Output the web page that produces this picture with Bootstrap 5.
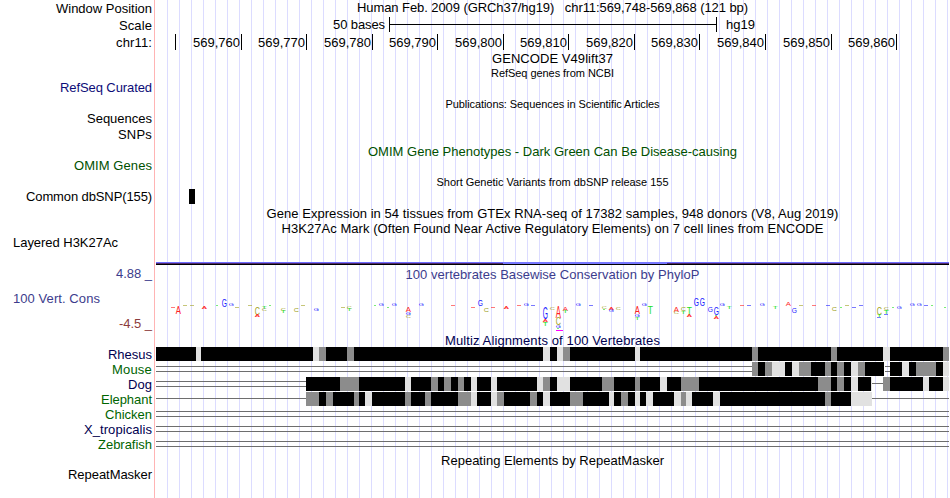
<!DOCTYPE html>
<html lang="en">
<head>
<meta charset="utf-8">
<title>Genome Browser chr11:569,748-569,868</title>
<meta name="viewport" content="width=device-width, initial-scale=1">
<link href="https://cdn.jsdelivr.net/npm/bootstrap@5.3.0/dist/css/bootstrap.min.css" rel="stylesheet">
<style>
body{background:#fff;color:#000;font:13px/15px "Liberation Sans",Arial,sans-serif;overflow:hidden}
.browser{width:949px;height:498px;
 background:linear-gradient(#ffb4b4,#ffb4b4) 154px 0/1px 100% no-repeat,
 repeating-linear-gradient(90deg,#dcdcff 0 1px,transparent 1px 12px) 167px 0/782px 100% no-repeat}
.labels{width:156px;padding:1px 4px 0 13px}
.tracks{width:793px}
.h14{height:14px}.h15{height:15px}.h16{height:16px}.h17{height:17px}.h25{height:25px}.h30{height:30px}
.h31{height:31px}.h45{height:45px}.h46{height:46px}.h47{height:47px}
.fine{font-size:11px}
.keep{white-space:pre}
.navy{color:#0c0c78}.deep{color:#000050}.green{color:#005000}.leaf{color:#006400}.cons{color:#3c3c8c}.neg{color:#8c3c3c}
.scalebar{width:328px;height:15px;border:solid #000;border-width:0 1px;background:linear-gradient(#000,#000) 0 7px/100% 1px no-repeat}
.scaletext{width:233px;padding-right:4px}
.assembly{padding-left:9px}
.ruler{display:grid;grid-template-columns:20px 66px 65px 66px 65px 66px 65px 66px 65px 66px 66px 65px;height:14px;margin-bottom:3px}
.ruler div{border-right:1px solid #000;padding-right:1px;padding-top:1px;display:flex;justify-content:flex-end}
svg{display:block}
</style>
<script src="https://cdn.jsdelivr.net/npm/bootstrap@5.3.0/dist/js/bootstrap.bundle.min.js"></script>
</head>
<body>
<main class="browser d-flex">
 <div class="labels d-flex flex-column text-end text-nowrap flex-shrink-0">
  <div class="h17"><span data-w="96">Window Position</span></div>
  <div class="h17"><span data-w="33">Scale</span></div>
  <div class="h45"><span data-w="36">chr11:</span></div>
  <div class="h31 navy"><span data-w="92">RefSeq Curated</span></div>
  <div class="h16"><span data-w="65">Sequences</span></div>
  <div class="h31"><span data-w="34">SNPs</span></div>
  <div class="h31 green"><span data-w="78">OMIM Genes</span></div>
  <div class="h46"><span data-w="126">Common dbSNP(155)</span></div>
  <div class="h31 text-start"><span data-w="105">Layered H3K27Ac</span></div>
  <div class="h25 cons"><span data-w="36">4.88 _</span></div>
  <div class="h25 cons text-start"><span data-w="87">100 Vert. Cons</span></div>
  <div class="h31 neg"><span data-w="33">-4.5 _</span></div>
  <div class="h15 deep"><span data-w="44">Rhesus</span></div>
  <div class="h15 leaf"><span data-w="40">Mouse</span></div>
  <div class="h15 deep"><span data-w="24">Dog</span></div>
  <div class="h15 leaf"><span data-w="51">Elephant</span></div>
  <div class="h15 leaf"><span data-w="47">Chicken</span></div>
  <div class="h15 deep"><span data-w="68">X_tropicalis</span></div>
  <div class="h30 leaf"><span data-w="54">Zebrafish</span></div>
  <div class="h31"><span data-w="84">RepeatMasker</span></div>
 </div>
 <div class="tracks d-flex flex-column text-center text-nowrap flex-shrink-0">
  <div class="h17"><span class="keep" data-w="391">Human Feb. 2009 (GRCh37/hg19)   chr11:569,748-569,868 (121 bp)</span></div>
  <div class="h17 d-flex">
   <div class="scaletext text-end"><span data-w="52">50 bases</span></div>
   <div class="scalebar"></div>
   <div class="assembly"><span data-w="29">hg19</span></div>
  </div>
  <div class="ruler" id="ruler"></div>
  <div class="h15"><span data-w="121">GENCODE V49lift37</span></div>
  <div class="h31 fine"><span data-w="123">RefSeq genes from NCBI</span></div>
  <div class="h47 fine"><span data-w="214">Publications: Sequences in Scientific Articles</span></div>
  <div class="h31 green"><span data-w="369">OMIM Gene Phenotypes - Dark Green Can Be Disease-causing</span></div>
  <div class="h14 fine"><span data-w="232">Short Genetic Variants from dbSNP release 155</span></div>
  <svg width="793" height="17"><rect x="33" y="0" width="6" height="15"/></svg>
  <div class="h15"><span data-w="572">Gene Expression in 54 tissues from GTEx RNA-seq of 17382 samples, 948 donors (V8, Aug 2019)</span></div>
  <div class="h15"><span data-w="542">H3K27Ac Mark (Often Found Near Active Regulatory Elements) on 7 cell lines from ENCODE</span></div>
  <svg width="793" height="31" shape-rendering="crispEdges"><path fill="#6e6eff" d="M0 26h793v1H0z"/><path fill="#50286e" d="M0 27h793v1H0z"/><path fill="#7878ff" d="M347 26h164v2H347z"/><path d="M0 28h793v1H0z"/></svg>
  <div class="h15 cons"><span data-w="294">100 vertebrates Basewise Conservation by PhyloP</span></div>
  <svg id="phylop" width="793" height="51" viewBox="156 282 793 51"></svg>
  <div class="h14 deep"><span data-w="215">Multiz Alignments of 100 Vertebrates</span></div>
  <svg id="multiz" width="793" height="106" viewBox="156 347 793 106" shape-rendering="crispEdges"></svg>
  <div class="h15"><span data-w="223">Repeating Elements by RepeatMasker</span></div>
 </div>
</main>
<script>
const NS='http://www.w3.org/2000/svg';
function add(parent,tag,attrs,text){const e=document.createElementNS(NS,tag);for(const k in attrs)e.setAttribute(k,attrs[k]);if(text)e.textContent=text;parent.appendChild(e);}
// Coordinate ruler, one cell per ten bases
const ruler=document.getElementById('ruler');
for(let i=0;i<12;i++){const d=document.createElement('div');if(i)d.innerHTML='<span data-w="47">569,'+(750+i*10)+'</span>';ruler.appendChild(d);}
// Conservation logo: letter, left, top, bottom
const color={A:'#ff2020',C:'#a0a020',G:'#2020ff',T:'#20e020'};
const logo=`A 171 307 308;A 176 307 314;C 183 305 306;C 190 305 306;A 202 307 309;T 215 305 306;G 222 299 307;G 229 304 306;C 235 307 308;C 248 305 306;C 255 307 315;A 255 315 317;T 262 307 309;C 262 309 311;T 268 305 306;C 281 308 311;T 281 311 313;C 294 308 312;C 301 305 306;G 314 308 311;
C 341 307 308;C 347 307 309;T 347 309 311;T 373 305 306;G 379 304 306;T 386 307 308;G 392 304 306;A 406 307 312;G 406 312 315;C 406 315 318;G 419 304 306;A 451 305 306;A 471 307 308;G 478 300 306;C 484 308 312;A 491 307 308;A 504 307 309;A 517 305 306;G 524 303 306;G 531 305 306;G 543 308 319;A 543 319 322;T 543 322 326;C 550 307 310;A 556 307 318;C 556 318 325;G 556 325 328;T 556 328 329;A 563 307 311;T 563 311 313;G 576 303 306;G 589 305 306;C 602 307 309;T 602 309 310;A 609 307 310;G 609 310 312;C 616 307 310;
A 635 307 314;G 635 314 317;T 635 317 320;G 642 303 306;T 648 307 314;A 674 307 312;C 674 312 314;C 681 307 311;T 681 311 314;T 687 308 315;A 687 315 317;G 694 298 306;G 700 298 306;G 708 307 312;G 714 308 315;T 714 315 316;A 714 316 319;G 720 303 306;T 727 307 309;A 740 305 306;G 747 305 306;G 760 304 306;T 773 307 309;A 786 302 306;G 792 308 313;C 799 305 306;A 812 305 306;G 826 305 306;C 832 307 311;T 839 307 308;C 845 305 306;G 852 307 308;G 859 305 306;C 877 307 315;T 877 315 317;G 877 317 318;C 884 307 310;T 884 310 314;G 884 314 315;T 891 307 308;G 897 307 309;G 910 304 306;G 917 304 306;G 924 305 306;T 930 305 306;T 943 307 308`;
const logoSvg=document.getElementById('phylop');
logo.replace(/\n/g,'').split(';').forEach(s=>{
 let [c,x,t,b]=s.split(' ');x=+x;t=+t;b=+b;
 if(b-t<2){add(logoSvg,'rect',{x:c=='T'?x+1:x,y:t,width:c=='T'?2:4,height:1,fill:color[c],opacity:.6});return;}
 const w={A:6.67,C:7.22,G:7.78,T:6.11}[c];
 add(logoSvg,'text',{transform:`translate(${x-.2} ${b}) scale(${5.2/w} ${(b-t)/7})`,'font-size':10,fill:color[c]},c);
});
add(logoSvg,'rect',{x:556,y:330,width:7,height:1,fill:'#ff00ff'});
// Alignment blocks: start position followed by shade + end position (k black, g gray, l light, n none)
const rows=[
'156 k196 l201 k313 l319 g326 k347 g354 k543 l550 k557 l563 g570 k635 l640 k752 g758 k831 g837 k883 l890 k943 g949',
'752 g758 k765 g772 l785 k792 l799 g811 k825 g831 k837 g844 k851 l858 g865 k884 n890 k902 l909 k916 g936 k943 l949',
'306 k340 g359 k405 l411 k431 g438 k444 g451 k458 g464 k471 l477 k491 l497 k537 l543 g550 k557 l570 k602 g614 k635 g640 k660 l667 k681 g699 k818 g831 k837 g844 k851 l858 k871 l872 n883 g890 k923 l929 k943 l949',
'306 g319 k326 g333 k354 g359 k365 l372 k405 g411 k425 g431 k458 g471 l477 k491 l497 g504 k530 g537 k543 l550 k570 g583 k609 l614 k621 g628 k635 l640 k646 l653 k674 l681 g686 l692 k713 l720 k825 g831 k851 l872'];
const ms=document.getElementById('multiz');
[[156,752,366],[156,752,371],[885,890,366],[885,890,371],[156,306,381],[156,306,386],[872,883,383],[156,306,398],[872,949,398],[156,949,411],[156,949,416],[156,949,426],[156,949,431],[156,949,441],[156,949,446]]
 .forEach(([a,b,y])=>add(ms,'rect',{x:a,y,width:b-a,height:1,fill:'#6e6e6e'}));
rows.forEach((r,i)=>{let p=r.split(' '),x=+p.shift();p.forEach(s=>{const e=+s.slice(1),f={k:'#000',g:'#8c8c8c',l:'#e1e1e1'}[s[0]];if(f)add(ms,'rect',{x,y:347+15*i,width:e-x,height:14,fill:f});x=e;});});
// Track text: spread letters to the column width set for each caption
document.querySelectorAll('[data-w]').forEach(s=>{s.style.letterSpacing=(s.dataset.w-s.getBoundingClientRect().width)/s.textContent.length+'px';});
</script>
</body>
</html>
